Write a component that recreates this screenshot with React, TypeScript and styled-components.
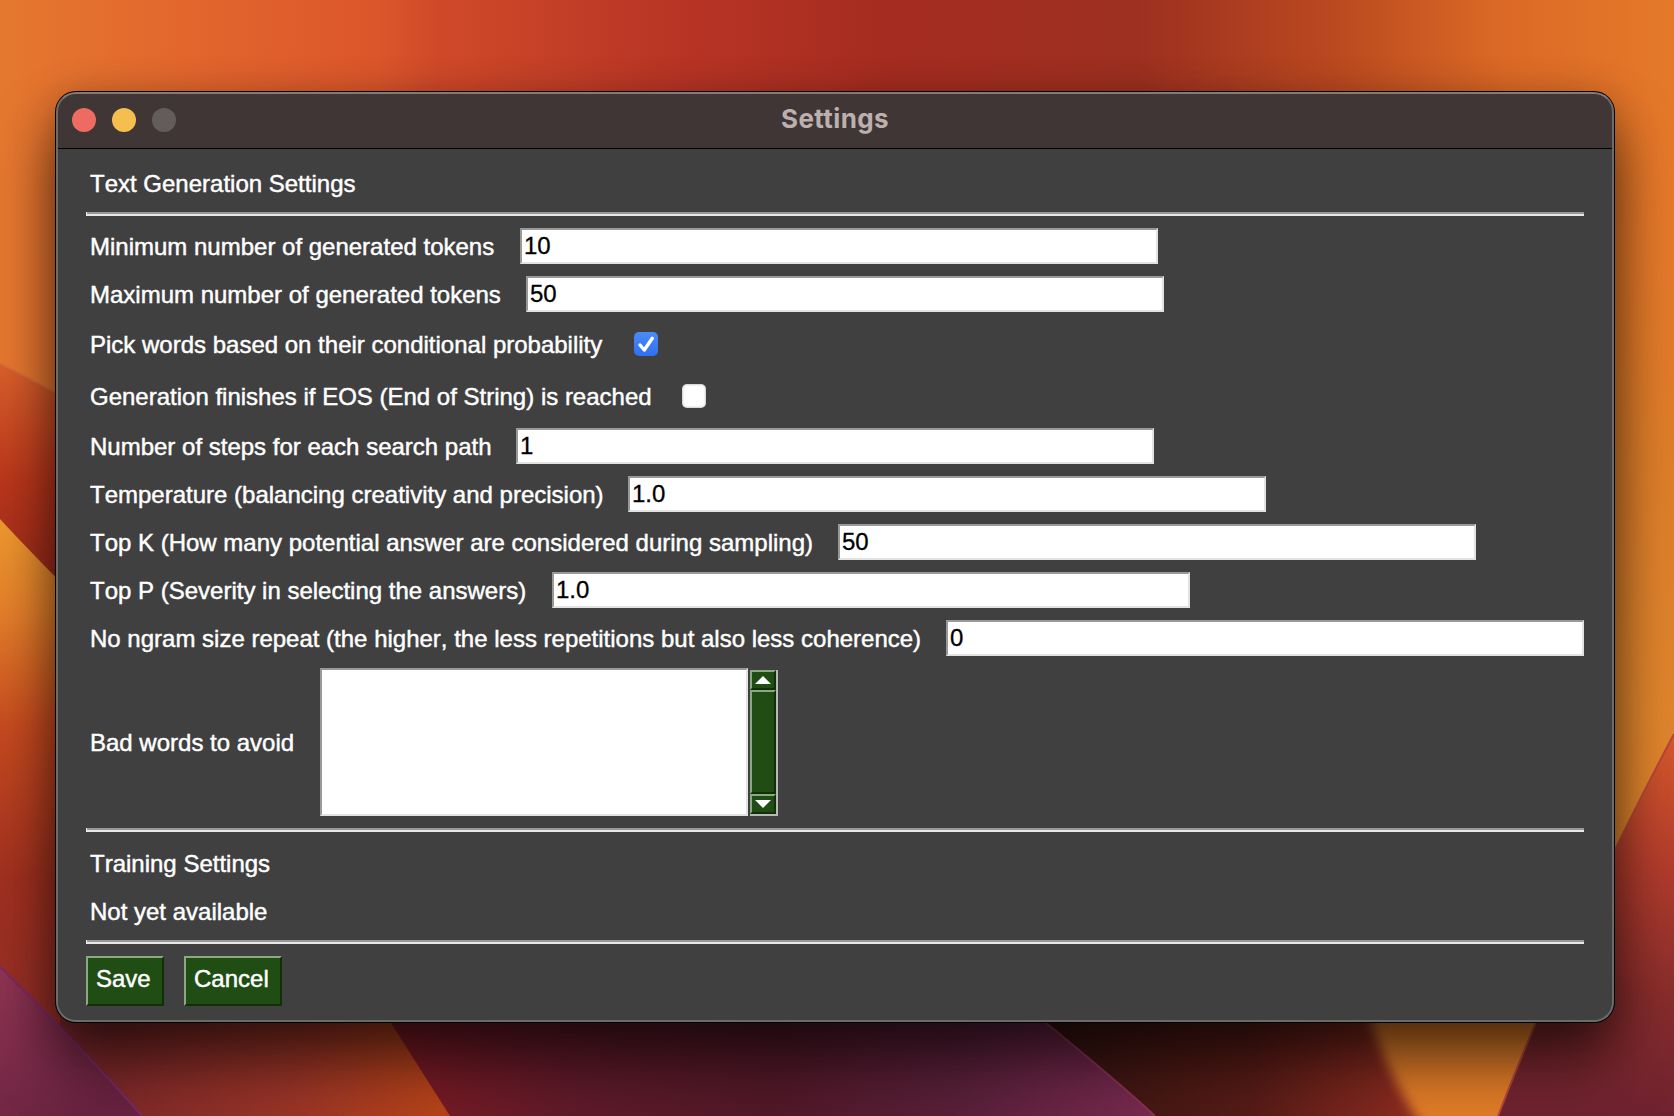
import React from "react";
import styled, { createGlobalStyle } from "styled-components";

const Global = createGlobalStyle`
  * { box-sizing: border-box; }
  html, body { margin: 0; padding: 0; overflow: hidden; }
  body { font-family: "Liberation Sans", Arial, Helvetica, sans-serif; font-kerning: none; }
`;

const Desktop = styled.main`
  position: relative;
  width: 1674px;
  height: 1116px;
  padding: 92px 60px 94px 56px;
  overflow: hidden;
  background: #9a2c1e;
`;

const Wallpaper = styled.svg`
  position: absolute;
  inset: 0;
  width: 100%;
  height: 100%;
`;

const Window = styled.section`
  position: relative;
  display: flex;
  flex-direction: column;
  width: 1558px;
  height: 930px;
  border-radius: 20px;
  overflow: hidden;
  background: #404040;
  box-shadow: 0 0 0 1px #000, 0 40px 60px rgba(0, 0, 0, 0.58), 0 6px 40px rgba(0, 0, 0, 0.25);
  &::after {
    content: "";
    position: absolute;
    inset: 0;
    border: 2px solid #6b6b6b;
    border-top-color: #837b79;
    border-radius: 20px;
    pointer-events: none;
  }
`;

const TitleBar = styled.header`
  display: grid;
  grid-template-columns: 1fr auto 1fr;
  align-items: center;
  flex: none;
  height: 57px;
  padding: 0 16px;
  border-bottom: 1px solid #000;
  background: #403635;
`;

const Lights = styled.div`
  display: flex;
  gap: 16px;
`;

const Light = styled.span<{ $color: string }>`
  width: 24px;
  height: 24px;
  border-radius: 50%;
  background: ${(p) => p.$color};
`;

const Title = styled.h1`
  margin: 0;
  padding-bottom: 2px;
  font: 700 26px/32px Inter, "Liberation Sans", sans-serif;
  letter-spacing: 0.4px;
  color: #bcb0af;
`;

const Content = styled.form`
  display: flex;
  flex-direction: column;
  padding: 19px 30px 0;
`;

const Label = styled.label`
  padding: 0 4px;
  font-size: 24px;
  line-height: 28px;
  white-space: nowrap;
  color: #fff;
  -webkit-text-stroke: 0.45px #fff;
`;

const Heading = styled(Label).attrs({ as: "h2" })<{ $height: number; $top: number }>`
  height: ${(p) => p.$height}px;
  margin: 0;
  padding-top: ${(p) => p.$top}px;
  font-weight: 400;
`;

const Separator = styled.hr`
  width: 1498px;
  height: 4px;
  margin: 0;
  border: 0;
  border-left: 1px solid #f0f0f0;
  background: linear-gradient(#999 50%, #e8e8e8 50%);
`;

const Fields = styled.div`
  display: flex;
  flex-direction: column;
  gap: 12px;
  padding: 12px 0;
`;

const Row = styled.div<{ $height?: number }>`
  display: flex;
  align-items: center;
  height: ${(p) => p.$height ?? 36}px;
`;

const LabelCell = styled.div<{ $width: number }>`
  flex: none;
  display: flex;
  width: ${(p) => p.$width}px;
  padding-top: 2px;
`;

const Entry = styled.input`
  width: 638px;
  height: 36px;
  padding: 0 2px 1px;
  border: 2px solid;
  border-color: #999 #e2e2e2 #e2e2e2 #999;
  border-radius: 0;
  outline: 0;
  background: #fff;
  color: #000;
  font: 24px/28px "Liberation Sans", Arial, sans-serif;
  -webkit-text-stroke: 0.3px #000;
`;

const Check = styled.button<{ $on: boolean }>`
  display: grid;
  place-items: center;
  width: 24px;
  height: 24px;
  padding: 0;
  border: 0;
  border-radius: 5px;
  background: ${(p) => (p.$on ? "linear-gradient(#4a8cf7, #2f6ff2)" : "#fff")};
  box-shadow: ${(p) => (p.$on ? "none" : "inset 0 0 2px 1px rgba(0,0,0,.2)")};
`;

const TextBox = styled.textarea`
  width: 428px;
  height: 148px;
  border: 2px solid;
  border-color: #999 #e2e2e2 #e2e2e2 #999;
  border-radius: 0;
  outline: 0;
  resize: none;
  background: #fff;
`;

const ScrollBar = styled.div`
  display: flex;
  flex-direction: column;
  width: 28px;
  height: 146px;
  margin: 2px 0 0 2px;
  border-right: 2px solid #b8b8b8;
  border-bottom: 2px solid #b8b8b8;
`;

const Raised = styled.div<{ $height: number }>`
  display: grid;
  place-items: center;
  width: 26px;
  height: ${(p) => p.$height}px;
  border: 2px solid;
  border-color: #8aa983 #122f0a #122f0a #8aa983;
  background: #204d13;
`;

const Actions = styled.div`
  display: flex;
  gap: 20px;
  padding-top: 12px;
`;

const Button = styled.button<{ $width: number }>`
  width: ${(p) => p.$width}px;
  height: 50px;
  padding: 0 0 4px 8px;
  border: 2px solid;
  border-color: #8aa983 #122f0a #122f0a #8aa983;
  border-radius: 0;
  background: #204d13;
  color: #fff;
  font: 24px/28px "Liberation Sans", Arial, sans-serif;
  text-align: left;
  -webkit-text-stroke: 0.45px #fff;
`;

type Field =
  | { kind: "text"; label: string; width: number; value: string }
  | { kind: "check"; label: string; width: number; on: boolean; height: number };

const fields: Field[] = [
  { kind: "text", label: "Minimum number of generated tokens", width: 434, value: "10" },
  { kind: "text", label: "Maximum number of generated tokens", width: 440, value: "50" },
  { kind: "check", label: "Pick words based on their conditional probability", width: 548, on: true, height: 40 },
  { kind: "check", label: "Generation finishes if EOS (End of String) is reached", width: 596, on: false, height: 40 },
  { kind: "text", label: "Number of steps for each search path", width: 430, value: "1" },
  { kind: "text", label: "Temperature (balancing creativity and precision)", width: 542, value: "1.0" },
  { kind: "text", label: "Top K (How many potential answer are considered during sampling)", width: 752, value: "50" },
  { kind: "text", label: "Top P (Severity in selecting the answers)", width: 466, value: "1.0" },
  { kind: "text", label: "No ngram size repeat (the higher, the less repetitions but also less coherence)", width: 860, value: "0" },
];

const Stop = ({ at, c, o = 1 }: { at: number; c: string; o?: number }) => (
  <stop offset={at} stopColor={c} stopOpacity={o} />
);

function Backdrop() {
  return (
    <Wallpaper viewBox="0 0 1674 1116" preserveAspectRatio="none" aria-hidden="true">
      <defs>
        <linearGradient id="sky" gradientUnits="userSpaceOnUse" x1="0" y1="40" x2="1674" y2="40">
          <Stop at={0} c="#e5782f" /><Stop at={0.12} c="#e2652d" /><Stop at={0.225} c="#dc562b" />
          <Stop at={0.26} c="#d04a29" /><Stop at={0.4} c="#b93525" /><Stop at={0.53} c="#a52c20" />
          <Stop at={0.68} c="#9d3020" /><Stop at={0.8} c="#bb4a20" /><Stop at={0.9} c="#dc6a26" /><Stop at={1} c="#e5792a" />
        </linearGradient>
        <linearGradient id="left" x1="0" y1="0" x2="0" y2="1">
          <Stop at={0} c="#d9602b" /><Stop at={0.5} c="#b9361b" /><Stop at={1} c="#98291a" />
        </linearGradient>
        <linearGradient id="flame" gradientUnits="userSpaceOnUse" x1="0" y1="520" x2="0" y2="1116">
          <Stop at={0} c="#ee992f" /><Stop at={0.15} c="#e4802a" /><Stop at={0.35} c="#c64a1f" />
          <Stop at={0.6} c="#a0301f" /><Stop at={1} c="#8a2c2b" />
        </linearGradient>
        <linearGradient id="plum" x1="0" y1="0" x2="0.6" y2="1">
          <Stop at={0} c="#8f3452" /><Stop at={1} c="#68223f" />
        </linearGradient>
        <linearGradient id="floor" gradientUnits="userSpaceOnUse" x1="60" y1="0" x2="450" y2="0">
          <Stop at={0} c="#75252a" /><Stop at={0.6} c="#9a3427" /><Stop at={1} c="#b84418" />
        </linearGradient>
        <linearGradient id="wine" gradientUnits="userSpaceOnUse" x1="400" y1="0" x2="1150" y2="0">
          <Stop at={0} c="#7a1a24" /><Stop at={0.25} c="#5d1a29" /><Stop at={0.5} c="#511828" /><Stop at={0.75} c="#592039" /><Stop at={1} c="#78294f" />
        </linearGradient>
        <linearGradient id="dusk" gradientUnits="userSpaceOnUse" x1="1060" y1="0" x2="1410" y2="0">
          <Stop at={0} c="#371511" /><Stop at={0.55} c="#561b16" /><Stop at={1} c="#8b2b20" />
        </linearGradient>
        <linearGradient id="amber" gradientUnits="userSpaceOnUse" x1="0" y1="100" x2="0" y2="1116">
          <Stop at={0} c="#e47828" o={0} /><Stop at={0.35} c="#de7e2a" /><Stop at={0.6} c="#df852d" /><Stop at={1} c="#e07b28" />
        </linearGradient>
        <linearGradient id="right" gradientUnits="userSpaceOnUse" x1="0" y1="730" x2="0" y2="1116">
          <Stop at={0} c="#d75a2b" /><Stop at={0.35} c="#b23c2c" /><Stop at={0.7} c="#872c2c" /><Stop at={1} c="#6e2230" />
        </linearGradient>
        <filter id="soft" x="-20%" y="-20%" width="140%" height="140%"><feGaussianBlur stdDeviation="6" /></filter>
      </defs>
      <rect width="1674" height="1116" fill="url(#sky)" />
      <path d="M0 364Q50 388 110 424V600H0Z" fill="url(#left)" />
      <path d="M0 364Q50 388 110 424" fill="none" stroke="#d66a38" strokeWidth="2" />
      <path d="M0 519Q60 584 180 700V1116H0Z" fill="url(#flame)" />
      <path d="M60 960H360L450 1116H60Z" fill="url(#floor)" />
      <path d="M0 967Q70 1035 142 1116H0Z" fill="url(#plum)" />
      <path d="M0 967Q70 1035 142 1116" fill="none" stroke="#78296a" strokeWidth="2" />
      <path d="M351 960H1000L1155 1116H450Z" fill="url(#wine)" />
      <path d="M980 970H1460V1116H1155Q1100 1065 980 970Z" fill="url(#dusk)" />
      <path d="M980 970Q1100 1065 1155 1116" fill="none" stroke="#893052" strokeWidth="2" />
      <path d="M1358 970Q1372 1050 1424 1130H1540V960Z" fill="url(#amber)" filter="url(#soft)" />
      <path d="M1540 100H1674V760L1560 960H1540Z" fill="url(#amber)" />
      <path d="M1674 734Q1570 930 1498 1116H1674Z" fill="url(#right)" />
      <path d="M1674 734Q1570 930 1498 1116" fill="none" stroke="#b5483a" strokeWidth="2" />
    </Wallpaper>
  );
}

export default function App() {
  return (
    <>
      <Global />
      <Desktop>
        <Backdrop />
        <Window>
          <TitleBar>
            <Lights>
              <Light $color="#ed6b60" />
              <Light $color="#f5be4f" />
              <Light $color="#625d5a" />
            </Lights>
            <Title>Settings</Title>
          </TitleBar>
          <Content>
            <Heading $height={44} $top={2}>Text Generation Settings</Heading>
            <Separator />
            <Fields>
              {fields.map((f) => (
                <Row key={f.label} $height={f.kind === "check" ? f.height : 36}>
                  <LabelCell $width={f.width}><Label>{f.label}</Label></LabelCell>
                  {f.kind === "text" ? (
                    <Entry defaultValue={f.value} aria-label={f.label} />
                  ) : (
                    <Check type="button" $on={f.on} aria-label={f.label}>
                      {f.on && (
                        <svg width="24" height="24" viewBox="0 0 24 24" fill="none">
                          <path d="M6 13L10.3 18L18.3 6.3" stroke="#fff" strokeWidth="3.4" strokeLinecap="round" strokeLinejoin="round" />
                        </svg>
                      )}
                    </Check>
                  )}
                </Row>
              ))}
              <Row $height={148}>
                <LabelCell $width={234}><Label>Bad words to avoid</Label></LabelCell>
                <TextBox aria-label="Bad words to avoid" />
                <ScrollBar>
                  <Raised $height={20}>
                    <svg width="16" height="8" viewBox="0 0 16 8"><path d="M8 0L16 8H0Z" fill="#fff" /></svg>
                  </Raised>
                  <Raised $height={104} />
                  <Raised $height={20}>
                    <svg width="16" height="8" viewBox="0 0 16 8"><path d="M0 0H16L8 8Z" fill="#fff" /></svg>
                  </Raised>
                </ScrollBar>
              </Row>
            </Fields>
            <Separator />
            <Heading $height={60} $top={18}>Training Settings</Heading>
            <Heading $height={48} $top={6}>Not yet available</Heading>
            <Separator />
            <Actions>
              <Button type="button" $width={78}>Save</Button>
              <Button type="button" $width={98}>Cancel</Button>
            </Actions>
          </Content>
        </Window>
      </Desktop>
    </>
  );
}
